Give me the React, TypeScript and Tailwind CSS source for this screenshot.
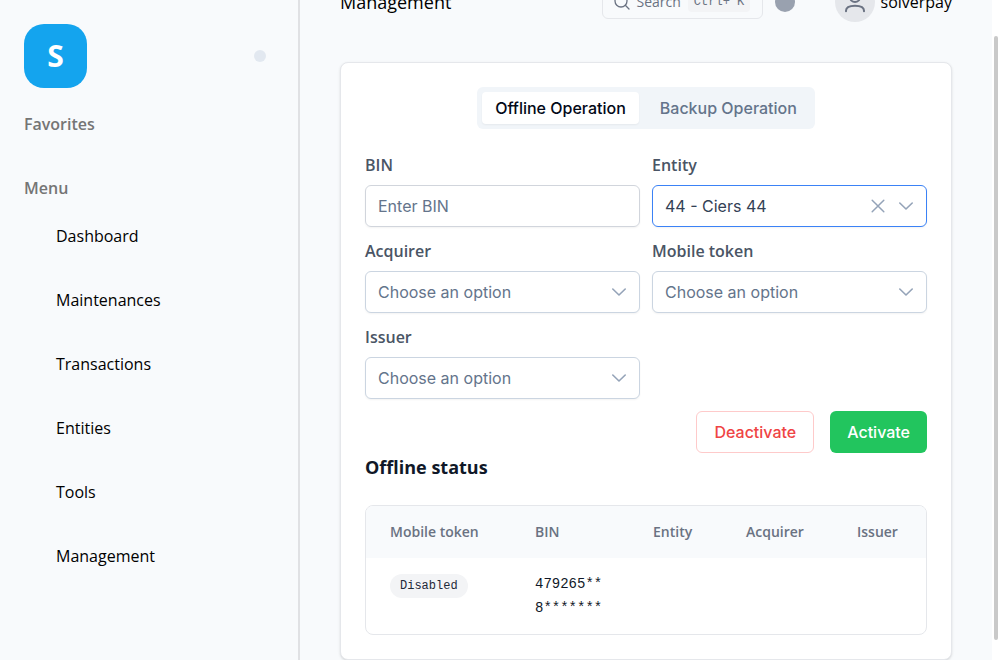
import { useState } from "react";
import type { ReactNode } from "react";

const menuItems = ["Dashboard", "Maintenances", "Transactions", "Entities", "Tools", "Management"];
const columns = ["Mobile token", "BIN", "Entity", "Acquirer", "Issuer"];

function ChevronIcon() {
  return (
    <svg viewBox="0 0 14 14" className="size-[14px]" fill="none" stroke="currentColor" strokeWidth="1.6" strokeLinecap="round" strokeLinejoin="round" aria-hidden="true">
      <path d="M0.8 4 7 10 13.2 4" />
    </svg>
  );
}

function ClearIcon() {
  return (
    <svg viewBox="0 0 14 14" className="size-[14px]" fill="none" stroke="currentColor" strokeWidth="1.5" strokeLinecap="round" aria-hidden="true">
      <path d="M1.2 1.2 12.8 12.8M12.8 1.2 1.2 12.8" />
    </svg>
  );
}

function SearchIcon() {
  return (
    <svg viewBox="0 0 16 16" className="size-4" fill="none" stroke="currentColor" strokeWidth="1.3" strokeLinecap="round" aria-hidden="true">
      <circle cx="7" cy="7" r="6" />
      <path d="M11.3 11.3 15 15" />
    </svg>
  );
}

function UserIcon() {
  return (
    <svg viewBox="0 0 24 24" className="size-6" fill="none" stroke="currentColor" strokeWidth="2" strokeLinecap="round" aria-hidden="true">
      <circle cx="12" cy="7" r="5" />
      <path d="M3 21.2v-.4C3 17.4 7 15.8 12 15.8s9 1.6 9 5v.4" />
    </svg>
  );
}

function Field({ id, label, children }: { id: string; label: string; children: ReactNode }) {
  return (
    <div className="flex flex-col gap-2">
      <label htmlFor={id} className="font-['Open_Sans',sans-serif] text-base leading-6 font-semibold text-gray-600">
        {label}
      </label>
      {children}
    </div>
  );
}

function SelectField({ id, label, option }: { id: string; label: string; option?: string }) {
  const [value, setValue] = useState(option ?? "");
  return (
    <Field id={id} label={label}>
      <div className="relative">
        <select
          id={id}
          value={value}
          onChange={(e) => setValue(e.target.value)}
          className={`h-[42px] w-full appearance-none rounded-md border bg-white pr-16 pl-3 text-base shadow-xs outline-none ${
            value ? "border-[#3b82f6] text-[#334155]" : "border-[#cbd5e1] text-[#64748b]"
          }`}
        >
          <option value="">Choose an option</option>
          {option && <option value={option}>{option}</option>}
        </select>
        <div className="pointer-events-none absolute inset-y-0 right-[14px] flex items-center gap-[14px] text-[#94a3b8]">
          {value && (
            <button type="button" aria-label={`Clear ${label}`} onClick={() => setValue("")} className="pointer-events-auto">
              <ClearIcon />
            </button>
          )}
          <ChevronIcon />
        </div>
      </div>
    </Field>
  );
}

function Sidebar() {
  return (
    <aside className="w-[300px] shrink-0 border-r-2 border-[#e0e1e4] py-6 pr-8 pl-6 font-['Open_Sans',sans-serif]">
      <div className="flex items-center justify-between">
        <div className="flex h-16 w-[63px] items-center justify-center rounded-[20px] bg-[#14a4ee] text-3xl font-bold text-white">S</div>
        <span className="size-3 rounded-full bg-[#e2e8f0]" />
      </div>
      <h2 className="mt-6 text-base leading-6 font-semibold text-[#757575]">Favorites</h2>
      <h2 className="mt-10 text-base leading-6 font-semibold text-[#757575]">Menu</h2>
      <nav className="mt-6 flex flex-col gap-10 pl-8">
        {menuItems.map((item) => (
          <a key={item} href="#" className="text-base leading-6 text-black">
            {item}
          </a>
        ))}
      </nav>
    </aside>
  );
}

function Header() {
  return (
    <header className="-mt-[18px] flex h-10 items-center font-['Open_Sans',sans-serif] text-black">
      <h1 className="flex-1 text-lg leading-7">Management</h1>
      <button type="button" className="flex h-[34px] w-[161px] items-center gap-[7px] rounded-md border border-gray-200 pl-[11px] text-sm text-gray-500">
        <SearchIcon />
        Search
        <kbd className="rounded-sm bg-gray-100 px-[6px] font-['Liberation_Mono',monospace] text-xs leading-5 whitespace-nowrap">Ctrl+ K</kbd>
      </button>
      <span className="ml-3 size-5 rounded-full bg-gray-400" />
      <div className="ml-10 flex items-center gap-[6px]">
        <span className="flex size-10 items-center justify-center rounded-full bg-gray-200 text-gray-500">
          <UserIcon />
        </span>
        <span className="text-base leading-6">solverpay</span>
      </div>
    </header>
  );
}

export default function App() {
  return (
    <div className="flex h-screen overflow-hidden bg-[#f8fafc] font-['Inter',sans-serif] text-gray-900">
      <Sidebar />
      <main className="min-w-0 flex-1 px-10">
        <Header />
        <section className="mt-10 rounded-lg border border-gray-200 bg-white p-6 shadow-sm">
          <div className="flex justify-center">
            <div role="tablist" className="flex gap-2 rounded-md bg-[#f1f5f9] p-[5px] text-base font-medium">
              <button type="button" role="tab" aria-selected="true" className="h-8 rounded bg-white px-[13px] text-[#020817] shadow-xs">
                Offline Operation
              </button>
              <button type="button" role="tab" aria-selected="false" className="h-8 rounded px-[13px] text-[#64748b]">
                Backup Operation
              </button>
            </div>
          </div>
          <div className="mt-6 grid grid-cols-2 gap-3">
            <Field id="bin" label="BIN">
              <input id="bin" placeholder="Enter BIN" className="h-[42px] w-full rounded-md border border-gray-300 px-3 text-base shadow-xs outline-none placeholder:text-[#64748b]" />
            </Field>
            <SelectField id="entity" label="Entity" option="44 - Ciers 44" />
            <SelectField id="acquirer" label="Acquirer" />
            <SelectField id="token" label="Mobile token" />
            <SelectField id="issuer" label="Issuer" />
          </div>
          <div className="mt-3 flex justify-end gap-4 text-base">
            <button type="button" className="h-[42px] rounded-md border border-[#fecaca] px-[17px] font-medium text-[#ef4444]">
              Deactivate
            </button>
            <button type="button" className="h-[42px] rounded-md bg-[#22c55e] px-[17px] font-medium text-white">
              Activate
            </button>
          </div>
          <h2 className="font-['Open_Sans',sans-serif] text-lg leading-7 font-bold">Offline status</h2>
          <div className="mt-6 overflow-hidden rounded-lg border border-gray-200">
            <table className="w-full table-fixed text-left">
              <colgroup>
                <col className="w-[145px]" />
                <col className="w-[118px]" />
                <col className="w-[93px]" />
                <col className="w-[111px]" />
                <col />
              </colgroup>
              <thead className="bg-[#f8fafc] font-['Open_Sans',sans-serif] text-sm text-gray-500">
                <tr>
                  {columns.map((column) => (
                    <th key={column} scope="col" className="h-[52px] pl-6 font-semibold">
                      {column}
                    </th>
                  ))}
                </tr>
              </thead>
              <tbody className="align-top font-['Liberation_Mono',monospace]">
                <tr>
                  <td className="pt-4 pl-6">
                    <span className="block w-fit rounded-full bg-gray-100 px-[10px] text-xs leading-6 text-gray-800">Disabled</span>
                  </td>
                  <td className="py-[14px] pl-6 text-sm leading-6">
                    479265**
                    <br />
                    8*******
                  </td>
                  <td />
                  <td />
                  <td />
                </tr>
              </tbody>
            </table>
          </div>
        </section>
      </main>
      <div className="flex w-2 shrink-0 justify-center bg-white pt-9 pb-5" aria-hidden="true">
        <div className="w-1 rounded-full bg-[#c9c9c9]" />
      </div>
    </div>
  );
}
